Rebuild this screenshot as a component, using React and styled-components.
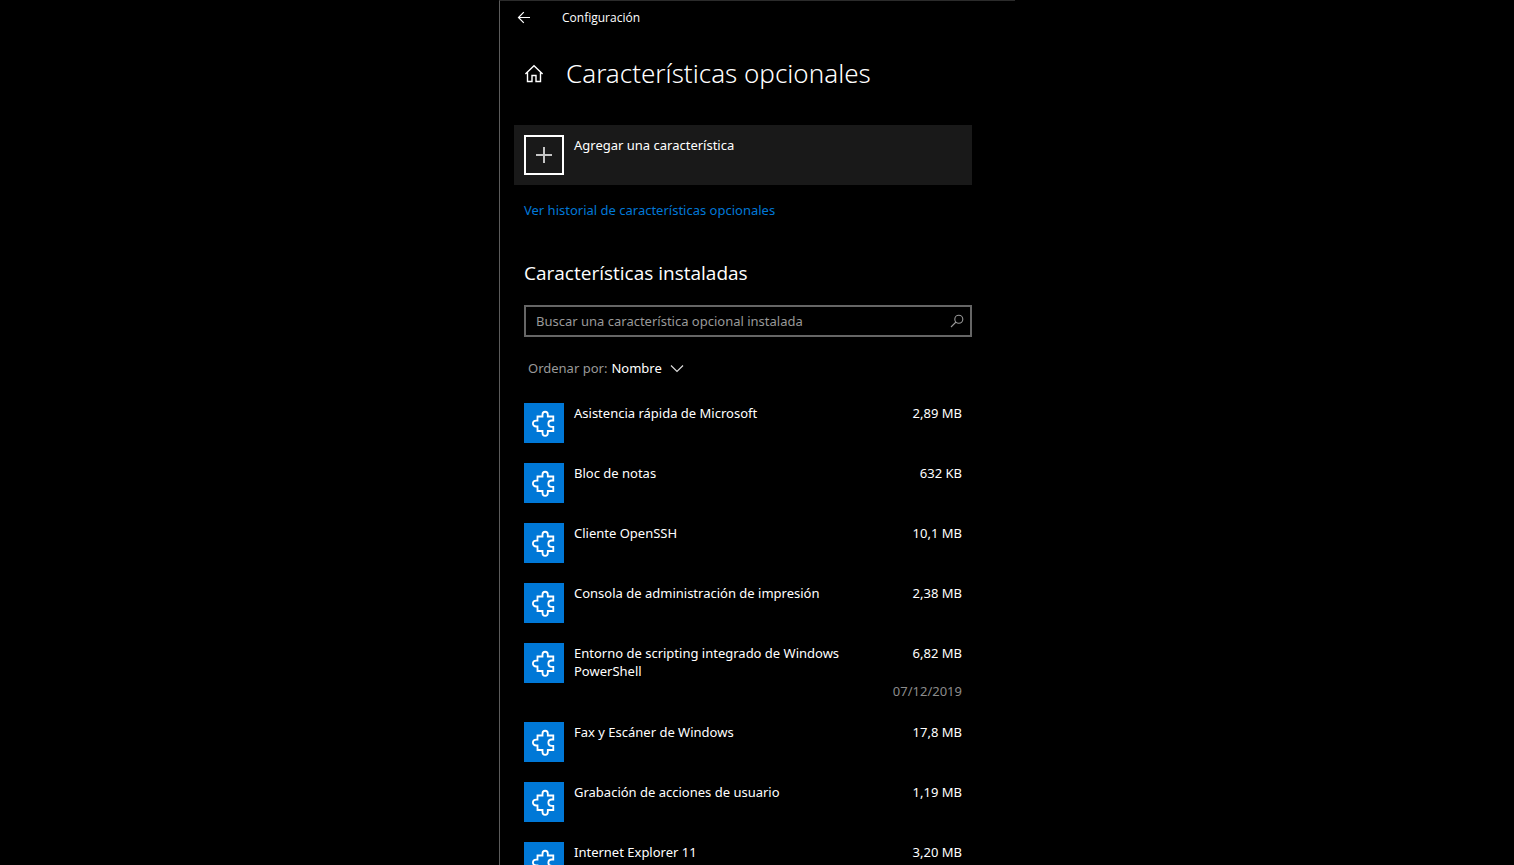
import React from "react";
import styled, { createGlobalStyle } from "styled-components";

const GlobalStyle = createGlobalStyle`
  *, *::before, *::after { box-sizing: border-box; }
  body {
    margin: 0;
    background: #000;
    color: #fff;
    font-family: "Segoe UI", "Noto Sans", "Open Sans", sans-serif;
    font-size: 13px;
    line-height: 18px;
  }
  button, input, select { font: inherit; color: inherit; }
`;

const Page = styled.div`
  height: 100vh;
  overflow: hidden;
  display: flex;
  justify-content: center;
`;

const Window = styled.div`
  width: 100%;
  max-width: 516px;
  border-left: 1px solid #5c5c5c;
  border-top: 1px solid #2b2b2b;
`;

const TitleBar = styled.header`
  display: flex;
  align-items: center;
  gap: 31px;
  height: 33px;
  padding-left: 17px;
  font-family: "Segoe UI", "Open Sans", "Noto Sans", sans-serif;
  font-size: 12px;
`;

const IconButton = styled.button`
  display: flex;
  padding: 0;
  border: 0;
  background: none;
`;

const PageHeading = styled.div`
  display: flex;
  align-items: center;
  gap: 22px;
  height: 77px;
  padding-left: 24px;
`;

const Title = styled.h1`
  margin: 0;
  font-family: "Segoe UI Light", "Noto Sans", "Open Sans", sans-serif;
  font-size: 26px;
  font-weight: 300;
  line-height: 36px;
`;

const Content = styled.main`
  padding: 14px 43px 0 14px;
`;

const AddButton = styled.button`
  display: flex;
  align-items: flex-start;
  gap: 10px;
  width: 100%;
  padding: 10px;
  border: 0;
  background: #191919;
  text-align: left;
`;

const AddIcon = styled.span`
  display: flex;
  align-items: center;
  justify-content: center;
  width: 40px;
  height: 40px;
  border: 2px solid #fff;
`;

const AddLabel = styled.span`
  padding-top: 1px;
`;

const Section = styled.div`
  padding-left: 10px;
`;

const HistoryLink = styled.a`
  display: block;
  margin-top: 16px;
  color: #0078d7;
  text-decoration: none;
`;

const SectionTitle = styled.h2`
  margin: 40px 0 18px;
  font-family: "Segoe UI", "Open Sans", "Noto Sans", sans-serif;
  font-size: 19px;
  font-weight: 400;
  line-height: 28px;
`;

const SearchBox = styled.label`
  display: flex;
  align-items: center;
  height: 32px;
  padding: 0 6px 0 10px;
  border: 2px solid #666;
`;

const SearchInput = styled.input`
  flex: 1;
  min-width: 0;
  padding: 0;
  border: 0;
  outline: 0;
  background: none;
  &::placeholder { color: #999; opacity: 1; }
`;

const SortRow = styled.div`
  display: flex;
  align-items: center;
  gap: 4px;
  margin-top: 22px;
  padding-left: 4px;
`;

const SortLabel = styled.label`
  color: #999;
`;

const SortField = styled.span`
  display: grid;
  align-items: center;
  justify-items: end;
  & > * { grid-area: 1 / 1; }
  svg { pointer-events: none; }
`;

const SortSelect = styled.select`
  appearance: none;
  width: 73px;
  height: 18px;
  padding: 0;
  border: 0;
  background: #000;
`;

const FeatureList = styled.ul`
  display: flex;
  flex-direction: column;
  gap: 20px;
  margin: 26px 0 0;
  padding: 0 10px 0 0;
  list-style: none;
`;

const Feature = styled.li`
  display: flex;
  align-items: flex-start;
  gap: 10px;
`;

const Tile = styled.span`
  flex: none;
  width: 40px;
  height: 40px;
  background: #0078d7;
`;

const FeatureName = styled.span`
  flex: 1;
  padding: 1px 30px 0 0;
`;

const Details = styled.span`
  display: flex;
  flex-direction: column;
  gap: 20px;
  padding-top: 1px;
  text-align: right;
`;

const InstallDate = styled.time`
  padding-bottom: 2px;
  color: #8c8c8c;
`;

const BackIcon = () => (
  <svg width="14" height="14" viewBox="0 0 14 14" fill="none" stroke="#fff" strokeWidth="1.2" aria-hidden="true">
    <path d="M13 6.5H1.5M6.8 1.2L1.5 6.5L6.8 11.8" />
  </svg>
);

const HomeIcon = () => (
  <svg width="20" height="20" viewBox="0 0 20 20" fill="none" stroke="#fff" strokeWidth="1.4" aria-hidden="true">
    <path d="M1.4 11L10 2.8L18.6 11M3.5 9.4V18.5H8V12.5H12V18.5H16.5V9.4" />
  </svg>
);

const PlusIcon = () => (
  <svg width="16" height="16" viewBox="0 0 16 16" fill="none" stroke="#c4c4c4" strokeWidth="2" aria-hidden="true">
    <path d="M8 0V16M0 8H16" />
  </svg>
);

const SearchIcon = () => (
  <svg width="14" height="14" viewBox="0 0 14 14" fill="none" stroke="#999" strokeWidth="1.1" aria-hidden="true">
    <circle cx="8.8" cy="5.2" r="4" />
    <path d="M6 8L1 13" />
  </svg>
);

const ChevronIcon = () => (
  <svg width="14" height="14" viewBox="0 0 14 14" fill="none" stroke="#ddd" strokeWidth="1.2" aria-hidden="true">
    <path d="M1 4.5L7 10.5L13 4.5" />
  </svg>
);

const PuzzleIcon = () => (
  <svg width="40" height="40" viewBox="0 0 40 40" fill="none" stroke="#fff" strokeWidth="1.8" strokeLinejoin="miter" aria-hidden="true">
    <path d="M13.5 13.5H18.5V11.5C18.5 7.8 23.8 7.8 23.8 11.5V13.5H29.3V17.5H27.8C23.2 17.5 23.2 23.8 27.8 23.8H29.3V28H23.8V30C23.8 33.8 18.5 33.8 18.5 30V28H13.5V23.5H12.2C7.8 23.5 7.8 17.7 12.2 17.7H13.5Z" />
  </svg>
);

const features = [
  { name: "Asistencia rápida de Microsoft", size: "2,89 MB" },
  { name: "Bloc de notas", size: "632 KB" },
  { name: "Cliente OpenSSH", size: "10,1 MB" },
  { name: "Consola de administración de impresión", size: "2,38 MB" },
  { name: "Entorno de scripting integrado de Windows PowerShell", size: "6,82 MB", date: "07/12/2019" },
  { name: "Fax y Escáner de Windows", size: "17,8 MB" },
  { name: "Grabación de acciones de usuario", size: "1,19 MB" },
  { name: "Internet Explorer 11", size: "3,20 MB" },
];

export default function App() {
  return (
    <>
      <GlobalStyle />
      <Page>
        <Window>
          <TitleBar>
            <IconButton type="button" aria-label="Atrás"><BackIcon /></IconButton>
            <span>Configuración</span>
          </TitleBar>
          <PageHeading>
            <IconButton type="button" aria-label="Inicio"><HomeIcon /></IconButton>
            <Title>Características opcionales</Title>
          </PageHeading>
          <Content>
            <AddButton type="button">
              <AddIcon><PlusIcon /></AddIcon>
              <AddLabel>Agregar una característica</AddLabel>
            </AddButton>
            <Section>
              <HistoryLink href="#historial">Ver historial de características opcionales</HistoryLink>
              <SectionTitle>Características instaladas</SectionTitle>
              <SearchBox>
                <SearchInput
                  type="text"
                  aria-label="Buscar una característica opcional instalada"
                  placeholder="Buscar una característica opcional instalada"
                />
                <SearchIcon />
              </SearchBox>
              <SortRow>
                <SortLabel htmlFor="orden">Ordenar por:</SortLabel>
                <SortField>
                  <SortSelect id="orden" defaultValue="nombre">
                    <option value="nombre">Nombre</option>
                  </SortSelect>
                  <ChevronIcon />
                </SortField>
              </SortRow>
              <FeatureList>
                {features.map((f) => (
                  <Feature key={f.name}>
                    <Tile><PuzzleIcon /></Tile>
                    <FeatureName>{f.name}</FeatureName>
                    <Details>
                      <span>{f.size}</span>
                      {f.date && <InstallDate>{f.date}</InstallDate>}
                    </Details>
                  </Feature>
                ))}
              </FeatureList>
            </Section>
          </Content>
        </Window>
      </Page>
    </>
  );
}
